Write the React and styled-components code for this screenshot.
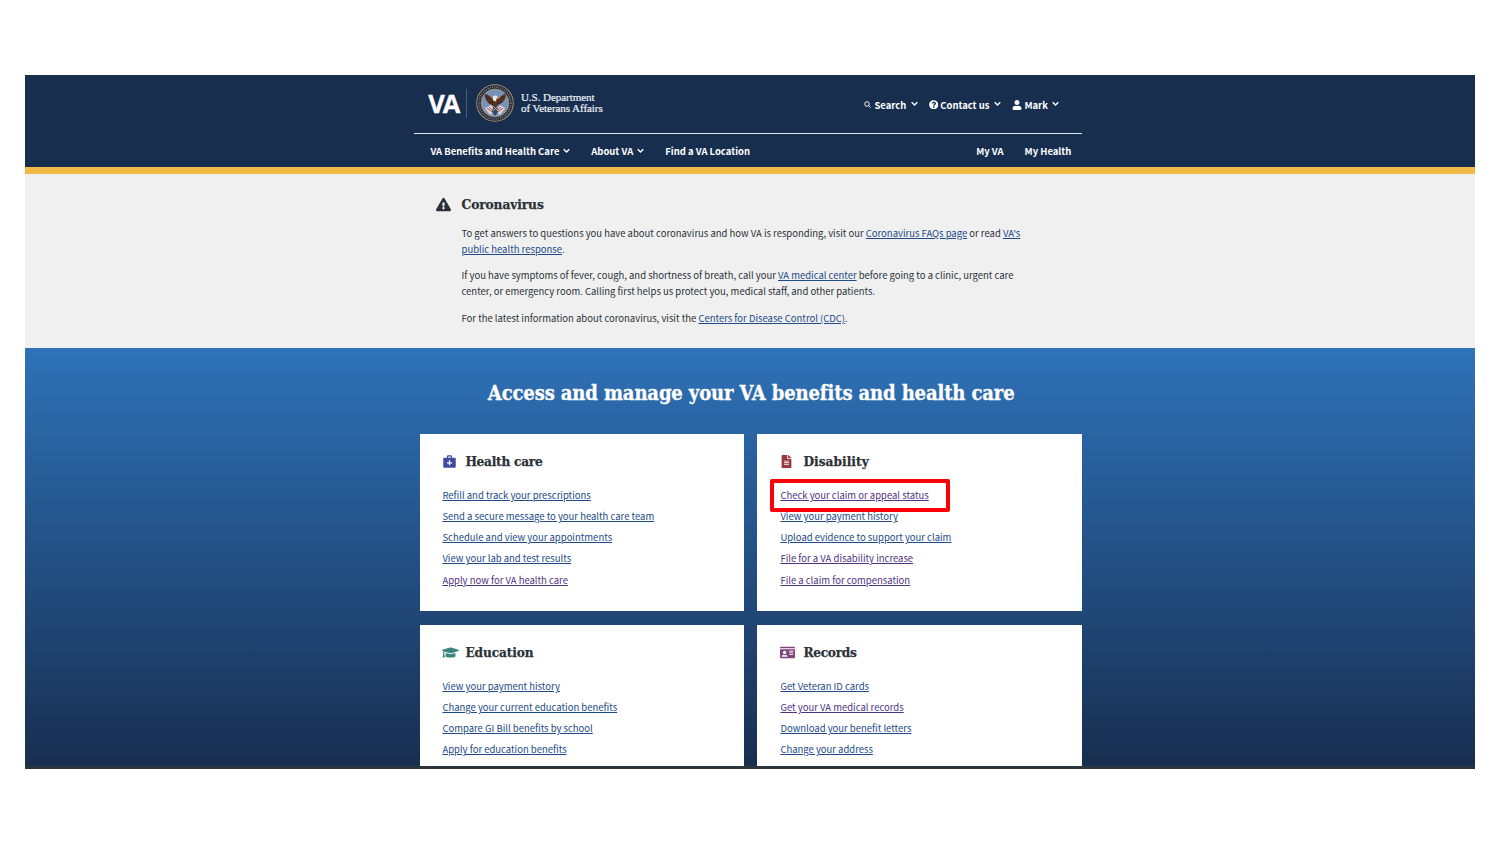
import React from "react";
import styled, { createGlobalStyle } from "styled-components";
import {
  FaQuestionCircle,
  FaUser,
  FaExclamationTriangle,
  FaGraduationCap,
  FaIdCard,
  FaFileAlt,
} from "react-icons/fa";
import { MdMedicalServices } from "react-icons/md";

const Global = createGlobalStyle`
  *, *::before, *::after { box-sizing: border-box; }
  body { margin: 0; background: #fff; }
  h1, h2, p, ul { margin: 0; padding: 0; }
`;

const sans = `"Noto Sans CJK JP", "Noto Sans", sans-serif`;
const slab = `"DejaVu Serif Condensed", "DejaVu Serif", serif`;

const Page = styled.div`
  width: 1500px;
  height: 844px;
  padding: 75px 25px;
  overflow: hidden;
  font-family: ${sans};
  color: #2b3138;
`;

const Screen = styled.main`
  height: 694px;
  display: flex;
  flex-direction: column;
  border-bottom: 3px solid #2c343c;
  overflow: hidden;
`;

const Header = styled.header`
  flex: none;
  height: 99px;
  padding-left: 389.4px;
  background: #182e4f;
  border-bottom: 7px solid #f2b945;
  color: #fff;
`;

const HeaderTop = styled.div`
  width: 668px;
  height: 59px;
  display: flex;
  align-items: center;
  border-bottom: 1px solid #dfe3ee;
`;

const Brand = styled.div`
  display: flex;
  align-items: center;
  height: 55px;
  padding: 0 0 2px 13.8px;
`;

const Wordmark = styled.span`
  width: 38px;
  padding-bottom: 1px;
  font: 700 25.5px/28px "Open Sans", sans-serif;
  letter-spacing: -2.1px;
  -webkit-text-stroke: 0.3px #fff;
`;

const Divider = styled.span`
  width: 1px;
  height: 29px;
  margin-right: 8.600px;
  background: #475f78;
`;

const Department = styled.span`
  margin-left: 7.2px;
  font: 400 11px/11px "Liberation Serif", serif;
  letter-spacing: -0.05px;
  white-space: nowrap;
  color: #eef2f8;
  -webkit-text-stroke: 0.2px #eef2f8;
`;

const Tools = styled.div`
  display: flex;
  align-items: center;
  margin-left: auto;
  padding: 1px 23.500px 0 0;
  gap: 11px;
`;

const Tool = styled.div`
  display: flex;
  align-items: center;
  gap: ${(p) => p.$gap || "2px"};
  font-size: 9.45px;
  font-weight: 700;
  line-height: 16px;
  white-space: nowrap;

  svg:last-child { margin-left: ${(p) => p.$chevron || "2px"}; margin-top: -1px; }
`;

const Nav = styled.nav`
  width: 668px;
  height: 33px;
  padding: 1px 11px 0 16px;
  display: flex;
  align-items: center;
`;

const NavItem = styled.span`
  display: flex;
  align-items: center;
  gap: 4px;
  margin-left: ${(p) => p.$before || "0"};
  font-size: 9.47px;
  font-weight: 700;
  line-height: 16px;
  white-space: nowrap;
`;

const Notice = styled.section`
  flex: none;
  height: 174px;
  padding: 19.500px 0 0 411px;
  display: flex;
  gap: 10.500px;
  background: #f0f0f0;

  > svg { flex: none; margin-top: 3.500px; }
`;

const NoticeBody = styled.div`
  display: flex;
  flex-direction: column;
`;

const NoticeTitle = styled.h2`
  margin-bottom: 11.3px;
  font: 700 13.6px/20px ${slab};
  letter-spacing: -0.1px;
  -webkit-text-stroke: 0.25px currentColor;
`;

const Paragraph = styled.p`
  margin-bottom: 10.5px;
  font-size: 9.49px;
  line-height: 16px;
  white-space: nowrap;
`;

const Link = styled.a`
  color: ${(p) => (p.$visited ? "#4f3383" : "#224a88")};
  text-decoration: underline;
  text-decoration-thickness: 1px;
  text-underline-offset: 1px;
`;

const Hub = styled.section`
  flex: 1;
  min-height: 0;
  padding: 30px 393px 0 395.4px;
  background: linear-gradient(#2e72b8, #182e50);
  overflow: hidden;
`;

const HubTitle = styled.h1`
  margin-bottom: 26px;
  font: 700 20px/30px ${slab};
  letter-spacing: -0.12px;
  text-align: center;
  white-space: nowrap;
  color: #fff;
  -webkit-text-stroke: 0.3px #fff;
`;

const Grid = styled.div`
  display: grid;
  grid-template-columns: 324px 325px;
  grid-template-rows: 177px 177px;
  gap: 14px 13px;
`;

const Card = styled.article`
  padding: 16px 22px 0;
  background: #fff;

  &:nth-child(even) { padding-left: 23px; }
`;

const CardHead = styled.div`
  display: flex;
  align-items: center;
  height: 22px;
  margin-bottom: 13px;
`;

const IconSlot = styled.span`
  width: 23px;
  display: flex;
  padding-top: 1px;
  color: ${(p) => p.$color};
`;

const CardTitle = styled.h2`
  font: 700 13.5px/22px ${slab};
  letter-spacing: ${(p) => p.$spacing};
  -webkit-text-stroke: 0.25px currentColor;
`;

const LinkList = styled.ul`
  list-style: none;
  font-size: 9.49px;
  line-height: 21.15px;
`;

const LinkItem = styled.li`
  position: relative;
  white-space: nowrap;
`;

const Highlight = styled.span`
  position: absolute;
  left: -10.500px;
  top: -6px;
  width: 180px;
  height: 33px;
  border: 4px solid #fb0007;
  border-radius: 2px;
`;

const Chevron = () => (
  <svg width="7" height="6" viewBox="0 0 7 6" fill="none" stroke="currentColor" strokeWidth="1.4">
    <path d="M0.7 1.2 3.5 4.1 6.3 1.2" />
  </svg>
);

const Lens = () => (
  <svg width="7" height="7" viewBox="0 0 7 7" fill="none" stroke="currentColor" strokeWidth="0.9">
    <circle cx="3" cy="3" r="2.3" />
    <path d="M4.7 4.7 6.6 6.6" />
  </svg>
);

const Seal = () => (
  <svg width="38" height="38" viewBox="0 0 38 38">
    <circle cx="19" cy="19" r="18.8" fill="#a58d65" />
    <circle cx="19" cy="19" r="17.8" fill="#1d2a42" />
    <circle cx="19" cy="19" r="15.9" fill="none" stroke="#8a8577" strokeWidth="1.5" strokeDasharray="1 1.1" />
    <circle cx="19" cy="19" r="13.9" fill="#7793b8" stroke="#b69a68" strokeWidth="0.8" />
    <path d="M8 23c0 5 5 9 11 9s11-4 11-9l-6 2H14z" fill="#8799b5" />
    <path d="m9 24 6-3 4 6-5 4zM29 24l-5-3-4 6 4 4z" fill="#ddd3da" />
    <path d="m11 24 5 4m-3-5 4 4m8-4-4 4m6-3-5 4" stroke="#bb4b57" strokeWidth="1" />
    <path d="M8.5 10c3 0 6 2 8 5l2-2.5h3l1.500 2c2-3 4.500-4.500 7-4.500 0 4-1.500 7-5 9.500l-3 1.500-3 4-3-4-3-1.500c-3-2.500-4.500-5.500-4.500-9.500z" fill="#573322" />
    <path d="m10 12 6 6m-4 0 5 2m11-8-6 6m4 0-5 2" stroke="#38221c" strokeWidth="0.9" />
    <path d="M17 12.500c1.500-1.800 4.500-1.300 5 1l-1.500 1-.5 3-3-1z" fill="#eee9dc" />
    <path d="m21 13 2.500 1-2.500 1z" fill="#e3a936" />
    <path d="m17.500 22h3.500l1 6-3 4-3-4z" fill="#31476f" />
    <path d="m17 22 5 5m0-5-5 5" stroke="#d1a45c" strokeWidth="0.9" />
  </svg>
);

const topics = [
  {
    title: "Health care",
    spacing: "-0.25px",
    color: "#3e4ba0",
    icon: <MdMedicalServices size={15} />,
    links: [
      ["Refill and track your prescriptions"],
      ["Send a secure message to your health care team"],
      ["Schedule and view your appointments"],
      ["View your lab and test results"],
      ["Apply now for VA health care", "visited"],
    ],
  },
  {
    title: "Disability",
    spacing: "0.05px",
    color: "#983a3e",
    icon: <FaFileAlt size={13} />,
    links: [
      ["Check your claim or appeal status", "visited", "marked"],
      ["View your payment history"],
      ["Upload evidence to support your claim"],
      ["File for a VA disability increase", "visited"],
      ["File a claim for compensation", "visited"],
    ],
  },
  {
    title: "Education",
    spacing: "-0.1px",
    color: "#3b8580",
    icon: <FaGraduationCap size={17} />,
    links: [
      ["View your payment history"],
      ["Change your current education benefits"],
      ["Compare GI Bill benefits by school"],
      ["Apply for education benefits"],
    ],
  },
  {
    title: "Records",
    spacing: "-0.25px",
    color: "#82447e",
    icon: <FaIdCard size={15} />,
    links: [
      ["Get Veteran ID cards"],
      ["Get your VA medical records", "visited"],
      ["Download your benefit letters"],
      ["Change your address"],
    ],
  },
];

export default function App() {
  return (
    <>
      <Global />
      <Page>
        <Screen>
          <Header>
            <HeaderTop>
              <Brand>
                <Wordmark>VA</Wordmark>
                <Divider />
                <Seal />
                <Department>
                  U.S. Department
                  <br />
                  of Veterans Affairs
                </Department>
              </Brand>
              <Tools>
                <Tool $gap="3px" $chevron="1.5px"><Lens />Search<Chevron /></Tool>
                <Tool $chevron="3px"><FaQuestionCircle size={9.5} />Contact us<Chevron /></Tool>
                <Tool><FaUser size={10} />Mark<Chevron /></Tool>
              </Tools>
            </HeaderTop>
            <Nav>
              <NavItem>VA Benefits and Health Care<Chevron /></NavItem>
              <NavItem $before="20.8px">About VA<Chevron /></NavItem>
              <NavItem $before="21px">Find a VA Location</NavItem>
              <NavItem $before="auto">My VA</NavItem>
              <NavItem $before="21px">My Health</NavItem>
            </Nav>
          </Header>
          <Notice>
            <FaExclamationTriangle size={15} />
            <NoticeBody>
              <NoticeTitle>Coronavirus</NoticeTitle>
              <Paragraph>
                To get answers to questions you have about coronavirus and how VA is responding, visit our{" "}
                <Link>Coronavirus FAQs page</Link> or read <Link>VA's<br />public health response</Link>.
              </Paragraph>
              <Paragraph>
                If you have symptoms of fever, cough, and shortness of breath, call your{" "}
                <Link>VA medical center</Link> before going to a clinic, urgent care
                <br />
                center, or emergency room. Calling first helps us protect you, medical staff, and other patients.
              </Paragraph>
              <Paragraph>
                For the latest information about coronavirus, visit the{" "}
                <Link>Centers for Disease Control (CDC)</Link>.
              </Paragraph>
            </NoticeBody>
          </Notice>
          <Hub>
            <HubTitle>Access and manage your VA benefits and health care</HubTitle>
            <Grid>
              {topics.map((t) => (
                <Card key={t.title}>
                  <CardHead>
                    <IconSlot $color={t.color}>{t.icon}</IconSlot>
                    <CardTitle $spacing={t.spacing}>{t.title}</CardTitle>
                  </CardHead>
                  <LinkList>
                    {t.links.map(([label, visited, marked]) => (
                      <LinkItem key={label}>
                        <Link $visited={Boolean(visited)}>{label}</Link>
                        {marked && <Highlight />}
                      </LinkItem>
                    ))}
                  </LinkList>
                </Card>
              ))}
            </Grid>
          </Hub>
        </Screen>
      </Page>
    </>
  );
}
